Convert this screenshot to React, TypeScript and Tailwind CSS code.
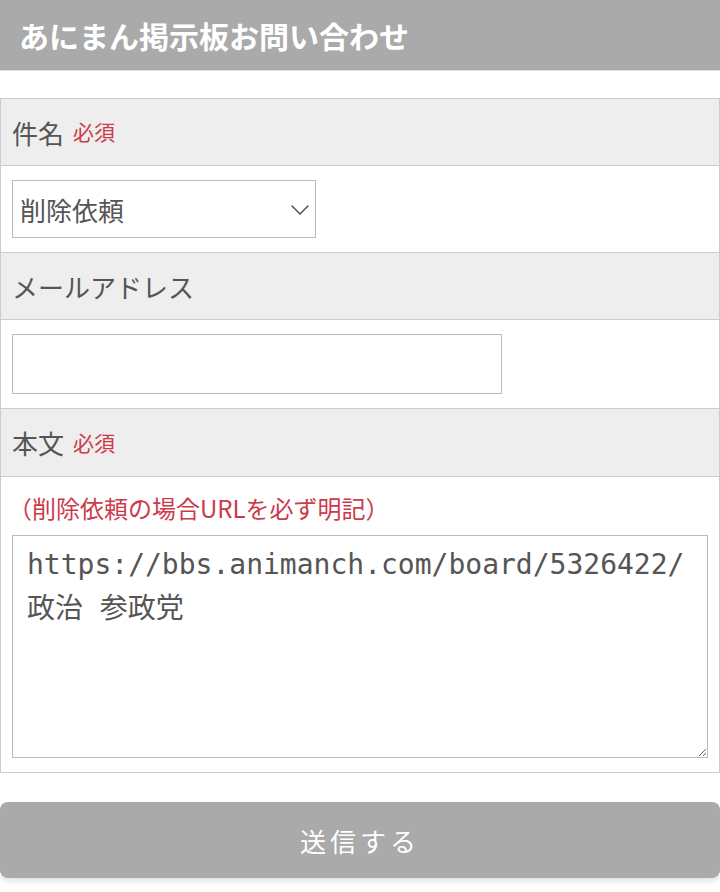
import { ChevronDown } from 'lucide-react';

const jp = { fontFamily: '"Noto Sans CJK JP", "Noto Sans", sans-serif' };

function Required() {
  return <span className="ml-[9px] text-[21px] text-[#cc3b4a]">必須</span>;
}

function RowHead({ children, tall }: { children: React.ReactNode; tall?: boolean }) {
  return (
    <div
      className={`flex items-center border-b border-[#cccccc] bg-[#eeeeee] px-[11px] text-[26px] text-[#555555] ${
        tall ? 'h-[68px]' : 'h-[67px]'
      }`}
    >
      {children}
    </div>
  );
}

export default function App() {
  return (
    <div className="min-h-[892px] bg-white" style={jp}>
      {/* Header */}
      <header className="flex h-[71px] items-center border-b border-[#e2e2e2] bg-[#aaaaaa] px-[19px]">
        <h1 className="text-[30px] font-bold text-white">あにまん掲示板お問い合わせ</h1>
      </header>

      <form className="pt-[27px]" onSubmit={(e) => e.preventDefault()}>
        <div className="border border-[#cccccc]">
          {/* Subject */}
          <RowHead>
            件名<Required />
          </RowHead>
          <div className="border-b border-[#cccccc] px-[11px] py-[14px]">
            <div className="relative w-[304px]">
              <select
                defaultValue="delete"
                className="h-[58px] w-full appearance-none border border-[#bbbbbb] bg-white pl-[7px] text-[26px] text-[#555555] outline-none"
                style={jp}
              >
                <option value="delete">削除依頼</option>
                <option value="other">その他</option>
              </select>
              <ChevronDown
                size={32}
                strokeWidth={1.2}
                className="pointer-events-none absolute right-[0px] top-[14px] text-[#555555]"
              />
            </div>
          </div>

          {/* Email */}
          <RowHead>メールアドレス</RowHead>
          <div className="border-b border-[#cccccc] px-[11px] py-[14px]">
            <input
              type="email"
              className="block h-[60px] w-[490px] border border-[#bbbbbb] bg-white px-[8px] text-[24px] text-[#555555] outline-none"
            />
          </div>

          {/* Body */}
          <RowHead tall>
            本文<Required />
          </RowHead>
          <div className="px-[11px] pb-[14px] pt-[13px]">
            <p className="-ml-[4px] text-[24px] leading-[36px] text-[#cc3b4a]">（削除依頼の場合URLを必ず明記）</p>
            <textarea
              defaultValue={'https://bbs.animanch.com/board/5326422/\n政治 参政党'}
              className="mt-[9px] block h-[223px] w-full border border-[#bbbbbb] bg-white px-[14px] pt-[7px] text-[28px] leading-[44px] text-[#555555] outline-none"
              style={{ fontFamily: '"DejaVu Sans Mono", "Noto Sans CJK JP", monospace' }}
            />
          </div>
        </div>

        {/* Submit */}
        <button
          type="submit"
          className="mt-[29px] flex h-[76px] w-full items-center justify-center rounded-[8px] bg-[#aaaaaa] text-[26px] tracking-[4px] text-white shadow-[0_3px_6px_rgba(0,0,0,0.12)]"
          style={jp}
        >
          送信する
        </button>
      </form>
    </div>
  );
}
